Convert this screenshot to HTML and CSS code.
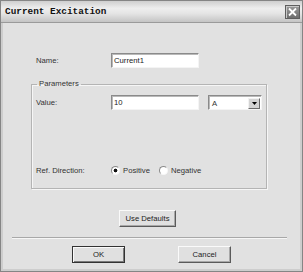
FILE: index.html
```html
<!DOCTYPE html>
<html>
<head>
<meta charset="utf-8">
<link rel="stylesheet" href="styles.css">
</head>
<body>
<div class="window">
  <div class="titlebar">
    <span class="title">Current Excitation</span>
    <span class="close"><svg width="11" height="10" viewBox="0 0 11 10"><path d="M2 1.5 L9 8.5 M9 1.5 L2 8.5" stroke="#fff" stroke-width="1.8" fill="none"/></svg></span>
  </div>
  <div class="body">
    <div class="row name-row">
      <span class="label">Name:</span>
      <span class="input">Current1</span>
    </div>
    <fieldset class="group">
      <legend>Parameters</legend>
      <div class="row">
        <span class="label">Value:</span>
        <span class="input">10</span>
        <span class="select"><span class="sel-text">A</span><span class="arrow"><svg width="5" height="3" viewBox="0 0 5 3"><path d="M0 0 H5 L2.5 3 Z" fill="#000"/></svg></span></span>
      </div>
      <div class="row dir-row">
        <span class="label">Ref. Direction:</span>
        <span class="radio checked"></span><span class="rtext">Positive</span>
        <span class="radio"></span><span class="rtext">Negative</span>
      </div>
    </fieldset>
    <div class="btn defaults">Use Defaults</div>
    <div class="sep"></div>
    <div class="actions">
      <div class="btn default">OK</div>
      <div class="btn">Cancel</div>
    </div>
  </div>
</div>
</body>
</html>
```
FILE: styles.css
```css
html, body {
  margin: 0;
  padding: 0;
  background: #ffffff;
}
.window {
  width: 303px;
  height: 272px;
  box-sizing: border-box;
  border: 1px solid #858585;
  background: #e1e1e1;
  display: flex;
  flex-direction: column;
  font-family: "Liberation Sans", Arial, sans-serif;
  font-size: 7.7px;
  color: #333;
}
.titlebar {
  height: 21px;
  flex: none;
  display: flex;
  align-items: center;
  justify-content: space-between;
  padding: 0 2px 0 4px;
  background: linear-gradient(#cfcfcf, #eeeeee 35%, #e4e4e4 60%, #c4c4c4);
  border-bottom: 1px solid #9a9a9a;
}
.title {
  font-family: "Liberation Mono", "Courier New", monospace;
  font-weight: bold;
  font-size: 9.4px;
  color: #111;
}
.close {
  width: 15px;
  height: 14px;
  box-sizing: border-box;
  border: 1px solid #5e5e5e;
  background: linear-gradient(#9a9a9a, #6e6e6e);
  display: flex;
  align-items: center;
  justify-content: center;
  box-shadow: inset 1px 1px 0 #c8c8c8;
}
.body {
  flex: 1;
  border-left: 2px solid #cdcdcd;
  border-right: 2px solid #cdcdcd;
  border-bottom: 2px solid #cdcdcd;
  padding-top: 30px;
  display: flex;
  flex-direction: column;
  align-items: flex-start;
}
.row {
  display: flex;
  align-items: center;
  height: 15px;
}
.name-row {
  margin-left: 33px;
}
.label {
  width: 75px;
  flex: none;
}
.input {
  width: 88px;
  height: 15px;
  box-sizing: border-box;
  background: #fff;
  border: 1px solid;
  border-color: #8a8a8a #f4f4f4 #f4f4f4 #8a8a8a;
  box-shadow: inset 1px 1px 0 #b9b9b9;
  padding: 1px 0 0 2px;
  line-height: 11px;
  color: #222;
}
.group {
  margin: 11px 0 0 28px;
  width: 236px;
  box-sizing: border-box;
  border: 1px solid #b4b4b4;
  box-shadow: 1px 1px 0 #f6f6f6, inset 1px 1px 0 #f6f6f6;
  padding: 6px 0 12px 4px;
  min-width: 0;
}
.group legend {
  padding: 0 2px;
  margin-left: 1px;
  line-height: 10px;
}
.select {
  margin-left: 9px;
  width: 54px;
  height: 15px;
  box-sizing: border-box;
  background: #fff;
  border: 1px solid;
  border-color: #8a8a8a #f4f4f4 #f4f4f4 #8a8a8a;
  box-shadow: inset 1px 1px 0 #b9b9b9;
  display: flex;
  align-items: center;
  justify-content: space-between;
  padding: 1px 1px 0 3px;
}
.arrow {
  width: 12px;
  height: 11px;
  box-sizing: border-box;
  background: #d3d3d3;
  border: 1px solid;
  border-color: #f2f2f2 #6a6a6a #6a6a6a #f2f2f2;
  display: flex;
  align-items: center;
  justify-content: center;
}
.dir-row {
  margin-top: 55px;
  height: 11px;
}
.radio {
  width: 9px;
  height: 9px;
  box-sizing: border-box;
  border-radius: 50%;
  border: 1px solid;
  border-color: #8a8a8a #f6f6f6 #f6f6f6 #8a8a8a;
  background: #fff;
  flex: none;
}
.radio.checked {
  background: radial-gradient(circle, #111 0 1.6px, #fff 2.2px);
}
.rtext {
  margin-left: 3px;
  margin-right: 9px;
}
.btn {
  height: 17px;
  box-sizing: border-box;
  background: #e0e0e0;
  border: 1px solid;
  border-color: #fafafa #5a5a5a #5a5a5a #fafafa;
  box-shadow: inset -1px -1px 0 #a8a8a8;
  display: flex;
  align-items: center;
  justify-content: center;
  color: #222;
}
.defaults {
  width: 57px;
  margin: 21px 0 0 116px;
}
.sep {
  margin: 10px 0 0 9px;
  width: 275px;
  height: 1px;
  background: #a8a8a8;
  border-bottom: 1px solid #f6f6f6;
}
.actions {
  display: flex;
  gap: 53px;
  margin: 7px 0 0 69px;
}
.actions .btn {
  width: 53px;
}
.btn.default {
  border: 1px solid #333;
  box-shadow: inset 1px 1px 0 #fafafa, inset -1px -1px 0 #7a7a7a;
}
```
